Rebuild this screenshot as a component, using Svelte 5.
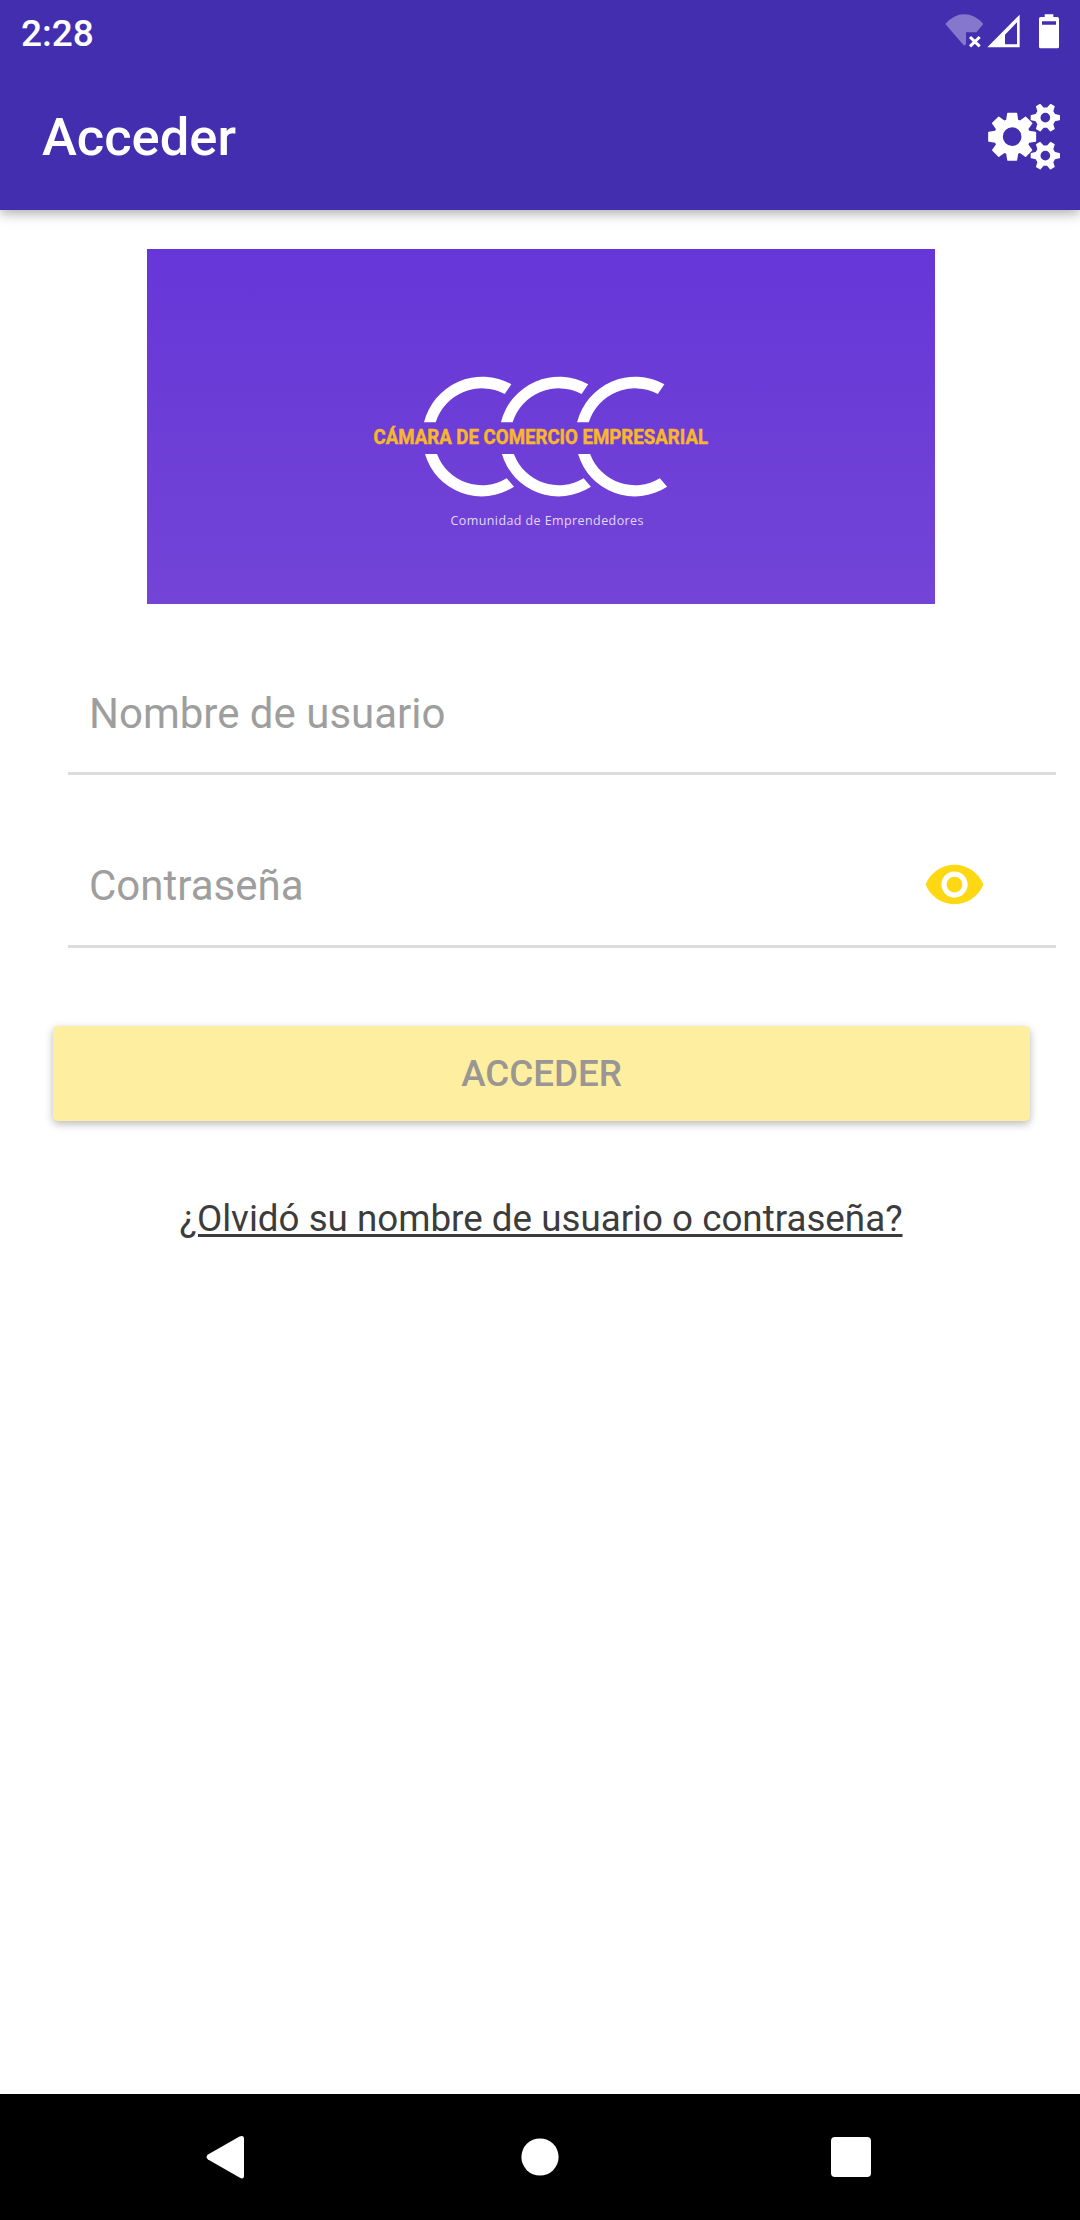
<script>
    let username = '';
    let password = '';
    let showPassword = false;

    // outline of a cog: n teeth, tooth tip / root radius and half widths
    function gear(cx, cy, n, tip, tipHalf, root, rootHalf, hole){
        let d = '';
        for (let i = 0; i < n; i++){
            const a = (i * 2 * Math.PI) / n;
            const at = (r, w) => {
                const x = cx + r * Math.cos(a) - w * Math.sin(a);
                const y = cy + r * Math.sin(a) + w * Math.cos(a);
                return x.toFixed(1) + ' ' + y.toFixed(1);
            };
            d += (i === 0 ? 'M' : 'L') + at(root, -rootHalf);
            d += 'L' + at(tip - 2, -tipHalf) + 'Q' + at(tip, -tipHalf) + ' ' + at(tip, -tipHalf + 2);
            d += 'L' + at(tip, tipHalf - 2) + 'Q' + at(tip, tipHalf) + ' ' + at(tip - 2, tipHalf);
            d += 'L' + at(root, rootHalf);
        }
        d += 'Z';
        d += `M${cx - hole} ${cy}a${hole} ${hole} 0 1 0 ${hole * 2} 0a${hole} ${hole} 0 1 0 ${-hole * 2} 0Z`;
        return d;
    }

    const cogs = [
        gear(72.5, 98, 8, 72, 15, 51, 18, 28),
        gear(172, 41, 6, 44, 8, 29, 11, 14.5),
        gear(172, 155, 6, 44, 8, 29, 11, 14.5)
    ];
    const letters = [0, 76.9, 153.1];
</script>


<main>
    <header>
        <div class="status">
            <span class="clock">2:28</span>
            <svg class="state" width="116" height="36" viewBox="0 0 348 108">
                <path fill="#fff" fill-opacity=".35" d="M4 33Q29 4 61 4T118 33L97 58H66V94Q63 98 59 97Z" />
                <path stroke="#fff" stroke-width="9" d="M78 72l29 28M107 72l-29 28" />
                <path fill="#fff" fill-rule="evenodd" d="M130 103L227 5V103ZM183 94H219V28L183 65Z" />
                <path fill="#fff" fill-rule="evenodd" d="M302 4h26v8h12q5 0 5 5v84q0 5-5 5h-50q-5 0-5-5V17q0-5 5-5h12ZM294 25v10h42V25Z" />
            </svg>
        </div>
        <div class="bar">
            <h1>Acceder</h1>
            <button class="settings" aria-label="Ajustes">
                <svg width="72" height="66" viewBox="0 0 216 198">
                    {#each cogs as d}
                        <path {d} fill="#fff" fill-rule="evenodd" />
                    {/each}
                </svg>
            </button>
        </div>
    </header>

    <section>
        <svg class="logo" width="788" height="355" viewBox="0 0 788 355">
            {#each letters as x}
                <g transform="translate({x} 0)" fill="#fff">
                    <path d="M277 173.3A60 60 0 0 1 364.3 135.3L357.7 145A48.5 48.5 0 0 0 288.7 173.3Z" />
                    <path d="M278 205A59 59 0 0 0 367 237.7L359.7 229.3A48 48 0 0 1 290 205Z" />
                </g>
            {/each}
            <text class="name" x="226.500" y="194.5" textLength="334.500" lengthAdjust="spacingAndGlyphs">CÁMARA DE COMERCIO EMPRESARIAL</text>
            <text class="tagline" x="303.500" y="276.2" textLength="193">Comunidad de Emprendedores</text>
        </svg>

        <form>
            <div class="field">
                <input type="text" placeholder="Nombre de usuario" bind:value={username}>
            </div>
            <div class="field password">
                <input type={showPassword ? 'text' : 'password'} placeholder="Contraseña" bind:value={password}>
                <button class="eye" type="button" aria-label="Mostrar" on:click={() => {showPassword = !showPassword}}>
                    <svg width="63" height="63" viewBox="0 0 24 24">
                        <path fill="#ffd814" d="M12 4.5C7 4.5 2.73 7.61 1 12c1.73 4.39 6 7.5 11 7.5s9.27-3.11 11-7.5c-1.73-4.39-6-7.5-11-7.5zM12 17c-2.76 0-5-2.24-5-5s2.24-5 5-5 5 2.24 5 5-2.24 5-5 5zm0-8c-1.66 0-3 1.34-3 3s1.34 3 3 3 3-1.34 3-3-1.34-3-3-3z" />
                    </svg>
                </button>
            </div>
            <button class="submit" type="submit" disabled>ACCEDER</button>
        </form>
        <a class="forgot" href="#recuperar">¿Olvidó su nombre de usuario o contraseña?</a>
    </section>

    <nav>
        <svg width="1080" height="126" viewBox="0 0 1080 126" fill="#fff">
            <path d="M208 60.5L239.5 42.5Q244 40.5 244 45V81.5Q244 86 239.5 83.5L208 65.5Q205 63 208 60.5Z" />
            <circle cx="540" cy="63" r="18.6" />
            <rect x="831" y="43" width="40" height="40" rx="4" />
        </svg>
    </nav>
</main>

<style>
    :global(body){
        background: #fff;
    }

    main{
        display: flex;
        flex-direction: column;
        width: 1080px;
        height: 2220px;
        font-family: Roboto, sans-serif;
    }

    header{
        height: 210px;
        background: #442eb0;
        color: #fff;
        box-shadow: 0 3px 12px rgba(0, 0, 0, 0.35);
    }

    .status{
        display: flex;
        justify-content: space-between;
        height: 63px;
        padding: 0 20px 0 21px;
    }

    .clock{
        font-size: 37px;
        font-weight: 500;
        line-height: 68px;
    }

    .state{
        margin-top: 13px;
    }

    .bar{
        display: flex;
        justify-content: space-between;
        align-items: center;
        height: 147px;
        padding: 0 20px 0 42px;
    }

    h1{
        margin: 0;
        font-size: 52.5px;
        font-weight: 500;
    }

    button{
        border: none;
        padding: 0;
        background: none;
        font-family: inherit;
    }

    .settings{
        display: flex;
    }

    section{
        display: flex;
        flex-direction: column;
        flex: 1;
        align-items: center;
        padding: 39px 24px 0 24px;
    }

    .logo{
        margin-left: 2px;
        background: linear-gradient(#6736d8, #7344d6);
    }

    .name{
        font-size: 20px;
        font-weight: 700;
        fill: #f8b62d;
        stroke: #f8b62d;
        stroke-width: 0.5px;
    }

    .tagline{
        font-family: "Open Sans", sans-serif;
        font-size: 12.5px;
        font-weight: 400;
        fill: #e2d8f8;
    }

    form{
        width: 100%;
    }

    .field{
        display: flex;
        align-items: center;
        height: 118px;
        margin: 50px 0 0 44px;
        padding-right: 70px;
        border-bottom: 3px solid #ddd;
    }

    .password{
        margin-top: 52px;
    }

    .password input{
        padding-bottom: 2px;
    }

    input{
        flex: 1;
        height: 100px;
        padding: 0 0 0 21px;
        border: none;
        outline: none;
        background: none;
        font-family: inherit;
        font-size: 42px;
        color: #333;
    }

    input::placeholder{
        color: #9e9e9e;
        opacity: 1;
    }

    .eye{
        display: flex;
        margin-bottom: 4px;
    }

    .submit{
        display: block;
        width: 977px;
        height: 95px;
        margin: 78px 0 0 29px;
        border-radius: 5px;
        background: #feee9f;
        box-shadow: 0 3px 8px rgba(0, 0, 0, 0.28);
        color: #999693;
        font-size: 36.75px;
        font-weight: 500;
    }

    .forgot{
        margin-top: 76px;
        margin-left: 2px;
        font-size: 36.75px;
        line-height: 43px;
        color: #3c3c3c;
        text-decoration-thickness: 3px;
        text-underline-offset: 3px;
    }

    nav{
        height: 126px;
        background: #000;
    }
</style>
